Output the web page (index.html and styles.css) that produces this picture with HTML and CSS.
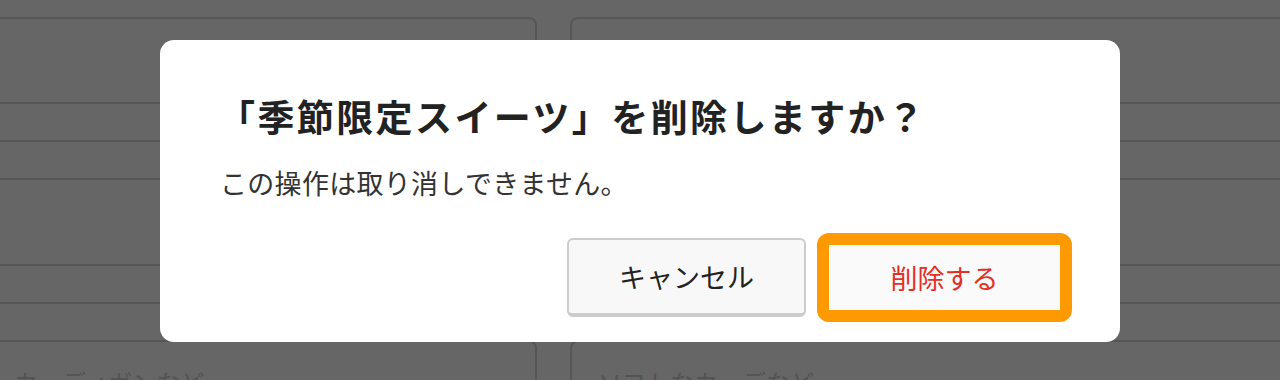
FILE: index.html
```html
<!DOCTYPE html>
<html lang="ja">
<head>
<meta charset="utf-8">
<title>削除の確認</title>
<link rel="stylesheet" href="styles.css">
</head>
<body>
<div class="page">
  <div class="grid">
    <section class="card card-top">
      <div class="row row-tall"></div>
      <div class="row"></div>
      <div class="row"></div>
      <div class="row row-tall"><span class="label">ソ</span></div>
      <div class="row"></div>
      <div class="row row-last"></div>
    </section>
    <section class="card card-top">
      <div class="row row-tall"></div>
      <div class="row"></div>
      <div class="row"></div>
      <div class="row row-tall"></div>
      <div class="row"></div>
      <div class="row row-last"></div>
    </section>
    <section class="card card-bottom card-bottom-left">
      <div class="placeholder">カーディガンなど</div>
    </section>
    <section class="card card-bottom card-bottom-right">
      <div class="placeholder">ソフトなカーデなど</div>
    </section>
  </div>
</div>

<div class="overlay">
  <div class="dialog" role="dialog" aria-modal="true">
    <h2 class="dialog-title">「季節限定スイーツ」を削除しますか？</h2>
    <p class="dialog-text">この操作は取り消しできません。</p>
    <div class="dialog-actions">
      <button class="btn btn-cancel" type="button">キャンセル</button>
      <button class="btn btn-delete" type="button">削除する</button>
    </div>
  </div>
</div>
</body>
</html>
```

FILE: styles.css
```css
* {
  box-sizing: border-box;
}

html, body {
  margin: 0;
  padding: 0;
  width: 1280px;
  height: 380px;
  overflow: hidden;
  background: #ffffff;
  font-family: "Noto Sans CJK JP", "Noto Sans", sans-serif;
}

.page {
  width: 1280px;
  height: 380px;
  overflow: hidden;
}

.grid {
  display: grid;
  grid-template-columns: 577px 760px;
  column-gap: 33px;
  margin-left: -40px;
  padding-top: 17px;
}

.card {
  border: 2px solid #d6d6d6;
}

.card-top {
  border-bottom: none;
  border-radius: 8px 8px 0 0;
  display: flex;
  flex-direction: column;
}

.row {
  height: 38px;
  border-bottom: 2px solid #d6d6d6;
  display: flex;
  align-items: center;
}

.row-tall {
  height: 86px;
}

.row-tall:first-child {
  height: 85px;
}

.row-last {
  border-bottom: none;
  height: 36px;
}

.label {
  padding-left: 15px;
  font-size: 26px;
  color: #111;
  line-height: 1;
}

.card-bottom {
  border-radius: 8px 8px 0 0;
  height: 60px;
  border-bottom: none;
}

.placeholder {
  font-size: 24px;
  line-height: 1;
  color: #cfcfcf;
  padding-top: 28px;
}

.card-bottom-left .placeholder {
  padding-left: 52px;
}

.card-bottom-right .placeholder {
  padding-left: 26px;
}

.overlay {
  position: fixed;
  inset: 0;
  background: rgba(0, 0, 0, 0.6);
  display: flex;
  justify-content: center;
  align-items: flex-start;
  padding-top: 40px;
}

.dialog {
  width: 960px;
  background: #ffffff;
  border-radius: 14px;
  padding: 52px 48px 20px 58px;
}

.dialog-title {
  margin: 0;
  font-size: 37px;
  line-height: 48px;
  font-weight: 700;
  color: #222222;
  letter-spacing: 2.4px;
}

.dialog-text {
  margin: 25px 0 0 2px;
  font-size: 27px;
  line-height: 36px;
  font-weight: 400;
  color: #333333;
  letter-spacing: 0.3px;
}

.dialog-actions {
  margin-top: 32px;
  display: flex;
  justify-content: flex-end;
  align-items: center;
  gap: 11px;
}

.btn {
  font-family: inherit;
  font-size: 27px;
  line-height: 1;
  cursor: pointer;
  padding: 0;
}

.btn-cancel {
  width: 239px;
  height: 79px;
  background: #f8f8f8;
  color: #222222;
  border: 2px solid #cccccc;
  border-bottom-width: 4px;
  border-radius: 6px;
}

.btn-delete {
  width: 255px;
  height: 89px;
  background: #fafafa;
  color: #e62e24;
  border: 12px solid #ff9900;
  border-radius: 12px;
}
```
